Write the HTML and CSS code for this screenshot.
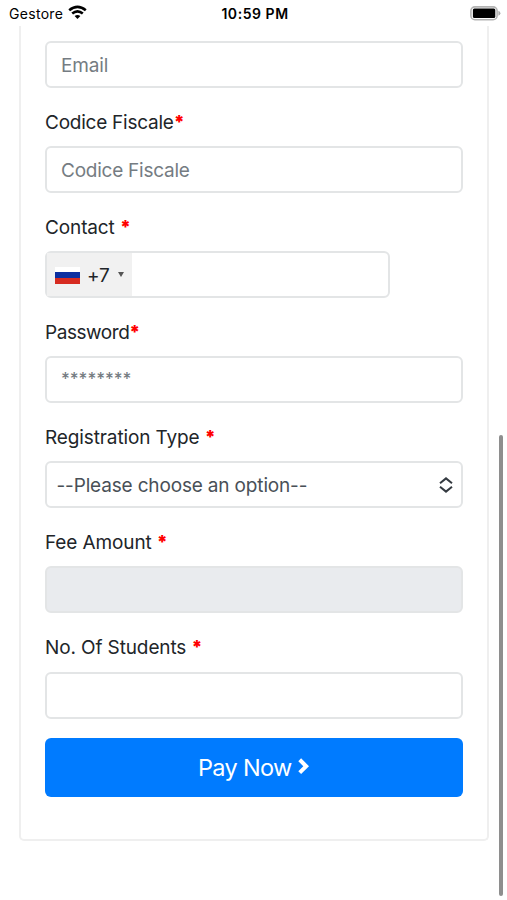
FILE: index.html
```html
<!DOCTYPE html>
<html lang="it">
<head>
<meta charset="utf-8">
<title>Gestore</title>
<link rel="stylesheet" href="styles.css">
</head>
<body>
<div class="screen">
  <header class="status">
    <div class="carrier"><span>Gestore</span>
      <svg class="wifi" width="19" height="15" viewBox="0 0 19 15" fill="none" stroke="#000" stroke-width="2.6"><path d="M1.2 5.2Q9.5-1.6 17.8 5.2"/><path d="M4.2 8.6Q9.5 4.1 14.8 8.6"/><path d="M9.5 14 6.6 11.1Q9.5 8.8 12.4 11.1Z" fill="#000" stroke="none"/></svg>
    </div>
    <div class="time">10:59 PM</div>
    <svg class="battery" width="31" height="15" viewBox="0 0 31 15"><rect x=".9" y=".9" width="26.2" height="12.8" rx="4" fill="#fff" stroke="#b3b3b3" stroke-width="1.6"/><rect x="2.9" y="2.6" width="22.4" height="9.4" rx="1.5" fill="#000"/><path d="M28.4 4.8Q30.4 5.5 30.4 7.3T28.4 9.8Z" fill="#aaa"/></svg>
  </header>
  <main class="card">
    <form class="form">
      <div class="field control"><span class="ph">Email</span></div>
      <div class="label"><span class="snug">Codice Fiscale</span><b>*</b></div>
      <div class="field control"><span class="ph snug">Codice Fiscale</span></div>
      <div class="label"><span>Contact</span> <b>*</b></div>
      <div class="control phone">
        <div class="country"><span class="flag"></span><span>+7</span><span class="caret"></span></div>
      </div>
      <div class="label"><span class="tight">Password</span><b>*</b></div>
      <div class="field control"><span class="ph stars">********</span></div>
      <div class="label"><span>Registration Type</span> <b>*</b></div>
      <div class="control select"><span>--Please choose an option--</span>
        <svg width="14" height="16" viewBox="0 0 14 16" fill="none" stroke="#343a40" stroke-width="2"><path d="M1 6.2 7 1.4l6 4.8M1 9.8l6 4.8 6-4.8"/></svg>
      </div>
      <div class="label"><span>Fee Amount</span> <b>*</b></div>
      <div class="control disabled"></div>
      <div class="label"><span>No. Of Students</span> <b>*</b></div>
      <div class="control"></div>
      <div class="pay"><span>Pay Now</span>
        <svg width="11" height="17" viewBox="0 0 11 17" fill="none" stroke="#fff" stroke-width="4"><path d="m1.7 1.8 6.5 6.4-6.5 6.4"/></svg>
      </div>
    </form>
  </main>
  <div class="scrollbar"></div>
</div>
</body>
</html>
```
FILE: styles.css
```css
* { box-sizing: border-box; }
body { margin: 0; background: #fff; font-family: Inter, "Liberation Sans", sans-serif; color: #212529; }
.screen { position: relative; width: 507px; height: 900px; overflow: hidden; }
.status { display: grid; grid-template-columns: 1fr auto 1fr; height: 26px; padding: 0 6px 0 9px; color: #000; font-size: 14px; line-height: 27px; }
.carrier { display: flex; gap: 5px; letter-spacing: .3px; }
.wifi { margin-top: 5px; }
.time { font-weight: 600; letter-spacing: .55px; }
.battery { justify-self: end; margin-top: 6px; }
.card { width: 470px; height: 815px; margin-left: 19px; padding: 15px 24px 0 23.5px; border: 2px solid #efefef; border-top: 0; border-radius: 0 0 5px 5px; }
.form { display: flex; flex-direction: column; }
.control { display: flex; align-items: center; height: 47px; border: 2px solid #e3e5e6; border-radius: 6px; font-size: 19px; letter-spacing: -.16px; }
.control > span { position: relative; top: 1px; }
.label { height: 58.1px; padding: 0 0 0 .5px; line-height: 69px; font-size: 19px; letter-spacing: -.12px; white-space: pre; }
.label b { position: relative; top: -1px; color: #f00; font-size: 18px; font-weight: 900; }
.snug { letter-spacing: -.24px; }
.tight { letter-spacing: -.45px; }
.field { padding-left: 14.5px; }
.ph { color: #757c82; }
.control > .stars { top: -1px; font-size: 17px; font-weight: 500; letter-spacing: -.05px; }
.phone { width: 345px; }
.country { display: flex; align-items: center; width: 85.5px; height: 100%; padding: 2px 0 0 8.5px; background: #f1f1f1; }
.flag { width: 25px; height: 17px; margin: 0 7px 1px 0; background: linear-gradient(#fff 0 31%, #0c2fa0 31% 66%, #d62b20 66%); }
.caret { margin: 0 0 2px 8px; border: 3.5px solid transparent; border-top: 5px solid #555; border-bottom: 0; }
.select { justify-content: space-between; padding: 0 8px 0 10px; color: #495057; }
.disabled { background: #e9ebee; }
.pay { display: flex; justify-content: center; align-items: center; gap: 7px; height: 59px; margin-top: 19px; border-radius: 6px; background: #007bff; color: #fff; font-size: 23.5px; letter-spacing: -.7px; }
.pay svg { margin-bottom: 1px; }
.scrollbar { position: absolute; left: 499px; top: 435px; width: 4px; height: 461px; border-radius: 2px; background: #8e8e8e; }
```
